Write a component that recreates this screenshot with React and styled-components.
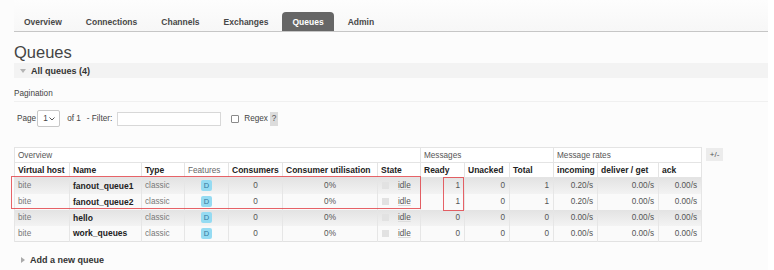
import React from 'react';
import styled, { createGlobalStyle } from 'styled-components';

const GlobalStyle = createGlobalStyle`
  html, body {
    margin: 0;
    padding: 0;
    background: #fff;
  }
  body {
    font-family: "Liberation Sans", Arial, sans-serif;
    color: #444;
  }
`

const Page = styled.div`
  width: 754px;
  min-height: 270px;
  padding-left: 14px;
  background: #fcfcfc;
`
const Nav = styled.ul`
  display: flex;
  gap: 4px;
  list-style: none;
  margin: 0;
  padding: 12px 0 0;
  border-bottom: 1px solid #c6c6c6;
  background: linear-gradient(#fdfdfd, #f7f7f7);
`
const Tab = styled.li`
  height: 19px;
  line-height: 20px;
  padding: 0 10px;
  font-size: 8.5px;
  font-weight: bold;
  color: ${(p) => (p.$active ? '#fff' : '#484848')};
  background: ${(p) => (p.$active ? '#666' : 'transparent')};
  border-radius: 4px 4px 0 0;
`
const Title = styled.h1`
  margin: 11px 0 0;
  font-size: 16.5px;
  line-height: 19px;
  font-weight: normal;
  color: #444;
`
const SectionBar = styled.div`
  margin-top: ${(p) => p.$top || 0}px;
  height: 15px;
  display: flex;
  align-items: center;
  gap: 5px;
  padding-left: 6px;
  background: ${(p) => (p.$plain ? 'transparent' : '#f3f3f3')};
  font-size: 9px;
  font-weight: bold;
  color: #333;
`
const ArrowDown = styled.span`
  width: 0;
  height: 0;
  border-left: 3px solid transparent;
  border-right: 3px solid transparent;
  border-top: 4px solid #b4b4b4;
`
const ArrowRight = styled.span`
  width: 0;
  height: 0;
  margin-left: 1px;
  border-top: 3px solid transparent;
  border-bottom: 3px solid transparent;
  border-left: 4px solid #aaa;
`
const SubHeading = styled.h3`
  margin: 10px 0 0;
  padding-bottom: 1px;
  font-size: 8.2px;
  line-height: 12px;
  font-weight: normal;
  color: #444;
  border-bottom: 1px solid #f0f0f0;
`
const Controls = styled.div`
  margin-top: 8px;
  height: 17px;
  display: flex;
  align-items: center;
  padding-left: 3px;
  font-size: 8.2px;
  color: #444;
`
const Label = styled.span`
  margin-left: ${(p) => p.$gap || 0}px;
`
const Select = styled.div`
  margin-left: 1px;
  width: 23px;
  height: 17px;
  box-sizing: border-box;
  display: flex;
  align-items: center;
  justify-content: space-between;
  padding: 0 4px 0 5px;
  border: 1px solid #c8c8c8;
  border-radius: 2px;
  background: #fff;
`
const Input = styled.div`
  margin-left: 5px;
  width: 104px;
  height: 14px;
  box-sizing: border-box;
  border: 1px solid #d8d8d8;
  background: #fff;
`
const Checkbox = styled.span`
  margin-left: 10px;
  width: 8px;
  height: 8px;
  box-sizing: border-box;
  border: 1px solid #8a8a8a;
  border-radius: 1px;
  background: #fff;
`
const Help = styled.span`
  margin-left: 2px;
  width: 8px;
  height: 14px;
  line-height: 14px;
  text-align: center;
  background: #dcdcdc;
  color: #555;
`
const TableArea = styled.div`
  margin-top: 20px;
  display: flex;
  align-items: flex-start;
  gap: 4px;
`
const TableBox = styled.div`
  position: relative;
`
const Table = styled.table`
  border-collapse: collapse;
  table-layout: fixed;
  width: 687px;
  font-size: 8.2px;
  border: 1px solid #e2e2e2;
`
const GroupTh = styled.th`
  height: 14px;
  padding: 0 3px;
  text-align: left;
  font-weight: normal;
  color: #555;
  background: #fff;
  border: 1px solid #e4e4e4;
`
const Th = styled.th`
  height: 14px;
  padding: 0 3px;
  text-align: left;
  font-size: ${(p) => (p.$light ? '8.2px' : '8.5px')};
  font-weight: ${(p) => (p.$light ? 'normal' : 'bold')};
  color: ${(p) => (p.$light ? '#666' : '#222')};
  background: #fff;
  border: 1px solid #e4e4e4;
  white-space: nowrap;
`
const Row = styled.tr`
  height: 16px;
  background: ${(p) => (p.$alt ? 'linear-gradient(#e3e3e3, #f3f3f3)' : '#fafafa')};
`
const Td = styled.td`
  padding: 0 ${(p) => (p.$align === 'right' ? 4 : 3)}px;
  text-align: ${(p) => p.$align || 'left'};
  font-size: ${(p) => (p.$bold ? '8.5px' : '8.2px')};
  font-weight: ${(p) => (p.$bold ? 'bold' : 'normal')};
  color: ${(p) => (p.$bold ? '#222' : p.$muted ? '#777' : '#555')};
  border-left: 1px solid #e6e6e6;
  border-right: 1px solid #e6e6e6;
  white-space: nowrap;
`
const Badge = styled.span`
  display: inline-block;
  width: 11px;
  height: 11px;
  line-height: 11px;
  border-radius: 2px;
  text-align: center;
  background: #95dbf2;
  color: #33779b;
  font-size: 7.5px;
`
const StateBox = styled.span`
  display: inline-block;
  width: 7px;
  height: 7px;
  margin-left: 1px;
  vertical-align: middle;
  background: #e2e2e2;
`
const StateText = styled.span`
  margin-left: 9px;
  vertical-align: middle;
  text-decoration: underline;
  text-decoration-color: #dcdcdc;
`
const ToggleButton = styled.div`
  margin-top: 1px;
  width: 17px;
  height: 13px;
  line-height: 13px;
  text-align: center;
  font-size: 8px;
  color: #555;
  background: #ececec;
`
const Mark = styled.div`
  position: absolute;
  left: ${(p) => p.$x}px;
  top: ${(p) => p.$y}px;
  width: ${(p) => p.$w}px;
  height: ${(p) => p.$h}px;
  box-sizing: border-box;
  border: 1.5px solid rgba(225, 60, 66, 0.8);
  pointer-events: none;
`

const tabs = ['Overview', 'Connections', 'Channels', 'Exchanges', 'Queues', 'Admin'];

const columns = [
  { label: 'Virtual host', width: 55 },
  { label: 'Name', width: 72 },
  { label: 'Type', width: 43 },
  { label: 'Features', width: 44, light: true },
  { label: 'Consumers', width: 54 },
  { label: 'Consumer utilisation', width: 95 },
  { label: 'State', width: 43 },
  { label: 'Ready', width: 44 },
  { label: 'Unacked', width: 45 },
  { label: 'Total', width: 44 },
  { label: 'incoming', width: 44 },
  { label: 'deliver / get', width: 61 },
  { label: 'ack', width: 43 },
];

const queues = [
  { name: 'fanout_queue1', ready: 1, total: 1, incoming: '0.20/s' },
  { name: 'fanout_queue2', ready: 1, total: 1, incoming: '0.20/s' },
  { name: 'hello', ready: 0, total: 0, incoming: '0.00/s' },
  { name: 'work_queues', ready: 0, total: 0, incoming: '0.00/s' },
];

function Chevron() {
  return (
    <svg width="6" height="4" viewBox="0 0 6 4">
      <path d="M0.5 0.5 L3 3 L5.5 0.5" fill="none" stroke="#555" strokeWidth="1" />
    </svg>
  );
}

export default function App() {
  return (
    <>
      <GlobalStyle />
      <Page>
        <Nav>
          {tabs.map((t) => (
            <Tab key={t} $active={t === 'Queues'}>{t}</Tab>
          ))}
        </Nav>

        <Title>Queues</Title>
        <SectionBar $top={1}>
          <ArrowDown />
          All queues (4)
        </SectionBar>

        <SubHeading>Pagination</SubHeading>
        <Controls>
          <Label>Page</Label>
          <Select>
            <span>1</span>
            <Chevron />
          </Select>
          <Label $gap={7}>of 1</Label>
          <Label $gap={6}>- Filter:</Label>
          <Input />
          <Checkbox />
          <Label $gap={5}>Regex</Label>
          <Help>?</Help>
        </Controls>

        <TableArea>
          <TableBox>
            <Table>
              <colgroup>
                {columns.map((c) => (
                  <col key={c.label} style={{ width: c.width }} />
                ))}
              </colgroup>
              <thead>
                <tr>
                  <GroupTh colSpan={7}>Overview</GroupTh>
                  <GroupTh colSpan={3}>Messages</GroupTh>
                  <GroupTh colSpan={3}>Message rates</GroupTh>
                </tr>
                <tr>
                  {columns.map((c) => (
                    <Th key={c.label} $light={c.light}>{c.label}</Th>
                  ))}
                </tr>
              </thead>
              <tbody>
                {queues.map((q, i) => (
                  <Row key={q.name} $alt={i % 2 === 0}>
                    <Td $muted>bite</Td>
                    <Td $bold>{q.name}</Td>
                    <Td $muted>classic</Td>
                    <Td $align="center"><Badge>D</Badge></Td>
                    <Td $align="center">0</Td>
                    <Td $align="center">0%</Td>
                    <Td>
                      <StateBox />
                      <StateText>idle</StateText>
                    </Td>
                    <Td $align="right">{q.ready}</Td>
                    <Td $align="right">0</Td>
                    <Td $align="right">{q.total}</Td>
                    <Td $align="right">{q.incoming}</Td>
                    <Td $align="right">0.00/s</Td>
                    <Td $align="right">0.00/s</Td>
                  </Row>
                ))}
              </tbody>
            </Table>
            <Mark $x={-3} $y={29} $w={410} $h={33} />
            <Mark $x={429} $y={30} $w={21} $h={34} />
          </TableBox>
          <ToggleButton>+/-</ToggleButton>
        </TableArea>

        <SectionBar $top={10} $plain>
          <ArrowRight />
          Add a new queue
        </SectionBar>
      </Page>
    </>
  );
}
